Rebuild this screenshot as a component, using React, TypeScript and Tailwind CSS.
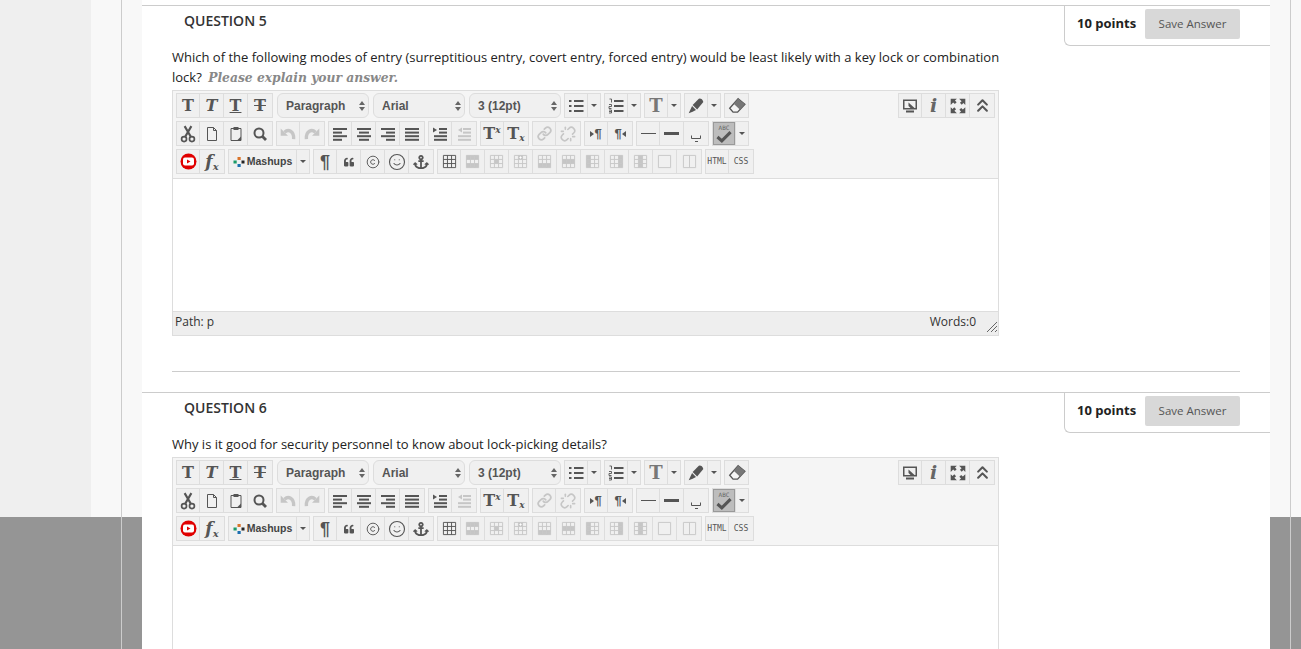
import type { ReactNode } from 'react';
import { Copyright, Link as LinkIcon, Unlink, Smile, ChevronsUp } from 'lucide-react';
import { FaAnchor, FaQuoteLeft } from 'react-icons/fa';

const DARK = '#555555';
const OFF = '#c6c6c6';

function Ico({ children, size = 16 }: { children: ReactNode; size?: number }) {
  return (
    <svg width={size} height={size} viewBox="0 0 16 16" fill="none">
      {children}
    </svg>
  );
}

function Btn({ children }: { children?: ReactNode }) {
  return <div className="flex items-center justify-center w-[24px] h-full">{children}</div>;
}

function Caret() {
  return (
    <div className="flex items-center justify-center w-[12px] h-full">
      <div className="w-0 h-0 border-l-[3px] border-r-[3px] border-t-[3px] border-l-transparent border-r-transparent border-t-[#555]" />
    </div>
  );
}

function Group({ children, className = '' }: { children: ReactNode; className?: string }) {
  return (
    <div className={`flex h-[25px] border border-[#ddd] bg-[#f0f0f0] divide-x divide-[#ddd] [&>*:first-child]:w-[23px] ${className}`}>
      {children}
    </div>
  );
}

function Letter({ children, className = '' }: { children: ReactNode; className?: string }) {
  return (
    <span className={`font-['DejaVu_Serif',serif] font-bold text-[16px] leading-none text-[#555] ${className}`}>
      {children}
    </span>
  );
}

function Select({ label, width }: { label: string; width: string }) {
  return (
    <div className={`flex items-center justify-between h-[25px] pl-[8px] pr-[3px] border border-[#ddd] rounded-md bg-[#f0f0f0] ${width}`}>
      <span className="font-['Liberation_Sans',sans-serif] font-bold text-[12px] text-[#555]">{label}</span>
      <div className="flex flex-col gap-[2px]">
        <div className="w-0 h-0 border-l-[3px] border-r-[3px] border-b-[4px] border-l-transparent border-r-transparent border-b-[#666]" />
        <div className="w-0 h-0 border-l-[3px] border-r-[3px] border-t-[4px] border-l-transparent border-r-transparent border-t-[#666]" />
      </div>
    </div>
  );
}

function Bars({ rows, color = DARK }: { rows: number[][]; color?: string }) {
  return (
    <Ico>
      {rows.map(([x, w], i) => (
        <rect key={i} x={x} y={2 + i * 3.6} width={w} height={2} fill={color} />
      ))}
    </Ico>
  );
}

function Indent({ color, out }: { color: string; out?: boolean }) {
  return (
    <Ico>
      <path d={out ? 'M6 1.5 v5 l-4 -2.5 z' : 'M1 1.5 v5 l4 -2.5 z'} fill={color} />
      <rect x="7" y="2" width="8" height="2" fill={color} />
      <rect x="7" y="5.6" width="8" height="2" fill={color} />
      <rect x="2" y="9.2" width="13" height="2" fill={color} />
      <rect x="2" y="12.8" width="13" height="2" fill={color} />
    </Ico>
  );
}

function Arrow({ flip }: { flip?: boolean }) {
  return (
    <svg width="18" height="18" viewBox="0 0 16 16" fill="none" className={flip ? '-scale-x-100' : ''}>
      <path d="M1.5 3 v6.5 h6.5 z" fill={OFF} />
      <path d="M5 6.5 C8 3.5 13.5 5 13 12.5" stroke={OFF} strokeWidth="3" />
    </svg>
  );
}

// 3x3 table glyph, cells listed in "fill" are shaded
function Grid({ color = OFF, fill = [], plus }: { color?: string; fill?: number[]; plus?: boolean }) {
  const cells = [0, 1, 2, 3, 4, 5, 6, 7, 8];
  return (
    <Ico size={15}>
      {cells
        .filter((c) => fill.includes(c))
        .map((c) => (
          <rect key={c} x={1.5 + (c % 3) * 4.33} y={1.5 + Math.floor(c / 3) * 4.33} width="4.33" height="4.33" fill={color} />
        ))}
      <path d="M1.5 1.5h13v13h-13z M1.5 5.83h13 M1.5 10.17h13 M5.83 1.5v13 M10.17 1.5v13" stroke={color} />
      {plus && <path d="M8 2.5v2.5 M6.8 3.7h2.4" stroke="#fff" />}
    </Ico>
  );
}

function Toolbar() {
  return (
    <div className="flex flex-col gap-[3px] pt-[2px] pb-[4px] px-[3px] bg-[#f5f5f5] border-b border-[#ddd]">
      <div className="flex">
        <Group>
          <Btn><Letter>T</Letter></Btn>
          <Btn><Letter className="italic">T</Letter></Btn>
          <Btn><Letter className="underline">T</Letter></Btn>
          <Btn><Letter className="line-through">T</Letter></Btn>
        </Group>
        <Select label="Paragraph" width="w-[92px] ml-[4px]" />
        <Select label="Arial" width="w-[92px] ml-[4px]" />
        <Select label="3 (12pt)" width="w-[92px] ml-[4px]" />
        <Group className="ml-[3px]">
          <Btn>
            <Ico>
              <rect x="1" y="2" width="2.5" height="2" fill={DARK} />
              <rect x="1" y="7" width="2.5" height="2" fill={DARK} />
              <rect x="1" y="12" width="2.5" height="2" fill={DARK} />
              <rect x="6" y="2" width="9.5" height="2" fill={DARK} />
              <rect x="6" y="7" width="9.5" height="2" fill={DARK} />
              <rect x="6" y="12" width="9.5" height="2" fill={DARK} />
            </Ico>
          </Btn>
          <Caret />
        </Group>
        <Group className="ml-[3px]">
          <Btn>
            <Ico>
              <path d="M1.5 1h2v3.5 M1 6.5h2.5v2h-2.5v2h2.5 M1 12h2.5v3h-2.5 M1 13.5h2.5" stroke={DARK} strokeWidth="0.9" />
              <rect x="6" y="2" width="9.5" height="2" fill={DARK} />
              <rect x="6" y="7" width="9.5" height="2" fill={DARK} />
              <rect x="6" y="12" width="9.5" height="2" fill={DARK} />
            </Ico>
          </Btn>
          <Caret />
        </Group>
        <Group className="ml-[3px]">
          <Btn><Letter className="text-[#777] text-[18px]">T</Letter></Btn>
          <Caret />
        </Group>
        <Group className="ml-[3px]">
          <Btn>
            <svg width="18" height="18" viewBox="0 0 16 16" fill="none">
              <path d="M5 7 L10.5 1.5 Q13.5 1 14.5 4.5 L9 11 Z" fill={DARK} />
              <path d="M4.5 8 L8 11.5 L5 13 L1.5 14.5 Z" fill={DARK} />
            </svg>
          </Btn>
          <Caret />
        </Group>
        <Group className="ml-[3px]">
          <Btn>
            <svg width="18" height="18" viewBox="0 0 16 16" fill="none">
              <path d="M9 1.5 L15 6.5 L8.5 13.5 L4.5 13.5 L1.5 10 Z" stroke={DARK} strokeWidth="1.2" fill="#f5f5f5" />
              <path d="M9 1.5 L15 6.5 L10.5 11 L5 6 Z" fill="#777" />
            </svg>
          </Btn>
        </Group>
        <Group className="ml-auto">
          <Btn>
            <Ico>
              <path d="M1 1.5h14v10H1z" fill={DARK} />
              <path d="M2.5 3h11v7h-11z" fill="#f0f0f0" />
              <path d="M6.5 4.5 L12.5 10 H8.5 L6.5 8 Z" fill={DARK} />
              <rect x="4" y="12.5" width="8" height="2" fill={DARK} />
            </Ico>
          </Btn>
          <Btn><Letter className="italic text-[#666] text-[19px]">i</Letter></Btn>
          <Btn>
            <svg width="18" height="18" viewBox="0 0 16 16">
              <path d="M1.5 1.5h5.5l-1.7 1.7 1.5 1.5-1.6 1.6-1.5-1.5L1.5 7z M14.5 1.5V7l-1.7-1.7-1.5 1.5-1.6-1.6 1.5-1.5L9 1.5z M1.5 14.5V9l1.7 1.7 1.5-1.5 1.6 1.6-1.5 1.5L7 14.5z M14.5 14.5H9l1.7-1.7-1.5-1.5 1.6-1.6 1.5 1.5L14.5 9z" fill={DARK} />
            </svg>
          </Btn>
          <Btn><ChevronsUp size={21} color={DARK} strokeWidth={2.4} /></Btn>
        </Group>
      </div>

      <div className="flex gap-[3px]">
        <Group>
          <Btn>
            <svg width="18" height="18" viewBox="0 0 16 16" fill="none">
              <circle cx="4.5" cy="12.5" r="2.2" stroke={DARK} strokeWidth="1.5" />
              <circle cx="11.5" cy="12.5" r="2.2" stroke={DARK} strokeWidth="1.5" />
              <path d="M5.5 10.5 L11 1 M10.5 10.5 L5 1" stroke={DARK} strokeWidth="1.9" />
            </svg>
          </Btn>
          <Btn>
            <Ico><path d="M3.5 1.5h6l3 3v10h-9z M9.5 1.5v3h3" stroke={DARK} /></Ico>
          </Btn>
          <Btn>
            <Ico>
              <path d="M3 2.5h10v12H3z" stroke={DARK} />
              <path d="M5.5 1h5v3h-5z" fill={DARK} />
              <path d="M9 14.5l4-4v4z" fill={DARK} />
            </Ico>
          </Btn>
          <Btn>
            <Ico>
              <circle cx="7" cy="7" r="4.5" stroke={DARK} strokeWidth="2" />
              <path d="M10 10 L14 14" stroke={DARK} strokeWidth="2.8" />
            </Ico>
          </Btn>
        </Group>
        <Group>
          <Btn><Arrow /></Btn>
          <Btn><Arrow flip /></Btn>
        </Group>
        <Group>
          <Btn><Bars rows={[[1, 14], [1, 9], [1, 14], [1, 9]]} /></Btn>
          <Btn><Bars rows={[[1, 14], [3, 10], [1, 14], [3, 10]]} /></Btn>
          <Btn><Bars rows={[[1, 14], [6, 9], [1, 14], [6, 9]]} /></Btn>
          <Btn><Bars rows={[[1, 14], [1, 14], [1, 14], [1, 14]]} /></Btn>
        </Group>
        <Group>
          <Btn><Indent color={DARK} /></Btn>
          <Btn><Indent color={OFF} out /></Btn>
        </Group>
        <Group>
          <Btn>
            <Letter>T<sup className="text-[9px] italic -top-[6px]">x</sup></Letter>
          </Btn>
          <Btn>
            <Letter>T<sub className="text-[9px] italic -bottom-[2px]">x</sub></Letter>
          </Btn>
        </Group>
        <Group>
          <Btn><LinkIcon size={15} color={OFF} strokeWidth={2.8} /></Btn>
          <Btn><Unlink size={16} color={OFF} strokeWidth={2.4} /></Btn>
        </Group>
        <Group>
          <Btn>
            <span className="flex items-center text-[#555] font-['Liberation_Sans',sans-serif] font-bold text-[13px] leading-none">
              <span className="w-0 h-0 border-t-[3px] border-b-[3px] border-l-[4px] border-t-transparent border-b-transparent border-l-[#555]" />¶
            </span>
          </Btn>
          <Btn>
            <span className="flex items-center text-[#555] font-['Liberation_Sans',sans-serif] font-bold text-[13px] leading-none">
              ¶<span className="w-0 h-0 border-t-[3px] border-b-[3px] border-r-[4px] border-t-transparent border-b-transparent border-r-[#555]" />
            </span>
          </Btn>
        </Group>
        <Group>
          <Btn><div className="w-[15px] h-px bg-[#555]" /></Btn>
          <Btn><div className="w-[15px] h-[3px] bg-[#555]" /></Btn>
          <Btn>
            <Ico>
              <path d="M3.5 9.5v3h9v-3" stroke={DARK} />
              <rect x="7" y="15" width="3" height="1" fill={DARK} />
            </Ico>
          </Btn>
        </Group>
        <Group>
          <Btn>
            <div className="flex flex-col items-center justify-center w-[23px] h-[23px] bg-[#bdbdbd] border border-[#999]">
              <span className="font-['DejaVu_Sans_Mono',monospace] text-[6px] leading-[6px] text-[#666]">ABC</span>
              <svg width="18" height="12" viewBox="0 0 16 11" fill="none">
                <path d="M2 5.5 L6 9 L14 1" stroke={DARK} strokeWidth="2.8" />
              </svg>
            </div>
          </Btn>
          <Caret />
        </Group>
      </div>

      <div className="flex gap-[3px]">
        <Group>
          <Btn>
            <svg width="17" height="17" viewBox="0 0 17 17">
              <circle cx="8.5" cy="8.5" r="8" fill="#e00000" />
              <rect x="3" y="4.5" width="11" height="8" rx="2" fill="#fff" />
              <path d="M7 6.5v4l3.5-2z" fill="#e00000" />
            </svg>
          </Btn>
          <Btn>
            <span className="font-['DejaVu_Serif',serif] font-bold italic text-[17px] leading-none text-[#555]">
              f<sub className="text-[10px] -bottom-[3px]">x</sub>
            </span>
          </Btn>
        </Group>
        <Group className="[&>*:first-child]:w-[68px]">
          <div className="flex items-center justify-center gap-[2px] h-full">
            <svg width="12" height="12" viewBox="0 0 12 12">
              <rect x="4.5" y="1" width="3.2" height="3" fill="#d9742b" />
              <rect x="0.5" y="4.5" width="3.2" height="3" fill="#1a9a68" />
              <rect x="8.5" y="4.5" width="3" height="3" fill="#222" />
              <rect x="4.5" y="8" width="3.2" height="3" fill="#1c6fb0" />
            </svg>
            <span className="font-['Liberation_Sans',sans-serif] font-bold text-[10.5px] text-[#444]">Mashups</span>
          </div>
          <Caret />
        </Group>
        <Group>
          <Btn>
            <span className="font-['Liberation_Sans',sans-serif] font-bold text-[18px] leading-none text-[#555]">¶</span>
          </Btn>
          <Btn><FaQuoteLeft size={10} color={DARK} /></Btn>
          <Btn><Copyright size={14} color={DARK} strokeWidth={1.6} /></Btn>
          <Btn><Smile size={18} color={DARK} strokeWidth={1.5} /></Btn>
          <Btn><FaAnchor size={16} color={DARK} /></Btn>
        </Group>
        <Group>
          <Btn><Grid color={DARK} /></Btn>
          <Btn><Grid fill={[0, 1, 2, 6, 7, 8]} /></Btn>
          <Btn><Grid fill={[4]} /></Btn>
          <Btn><Grid fill={[1]} plus /></Btn>
          <Btn><Grid fill={[6, 7, 8]} /></Btn>
          <Btn><Grid fill={[3, 4, 5]} /></Btn>
          <Btn><Grid fill={[0, 3, 6]} /></Btn>
          <Btn><Grid fill={[2, 5, 8]} /></Btn>
          <Btn><Grid fill={[1, 4, 7]} /></Btn>
          <Btn>
            <Ico size={15}><path d="M1.5 1.5h13v13h-13z" stroke={OFF} /></Ico>
          </Btn>
          <Btn>
            <Ico size={15}><path d="M1.5 1.5h13v13h-13z M8 1.5v13" stroke={OFF} /></Ico>
          </Btn>
        </Group>
        <Group>
          <Btn>
            <span className="font-['DejaVu_Sans_Mono',monospace] text-[8px] text-[#555]">HTML</span>
          </Btn>
          <Btn>
            <span className="font-['DejaVu_Sans_Mono',monospace] text-[8px] text-[#555]">CSS</span>
          </Btn>
        </Group>
      </div>
    </div>
  );
}

function Editor() {
  return (
    <div className="w-[827px] border border-[#ddd]">
      <Toolbar />
      <div className="h-[132px] bg-white" />
      <div className="flex items-center justify-between h-[24px] pl-[2px] pb-[4px] bg-[#eeeeee] border-t border-[#ddd] text-[12px] text-[#333]">
        <span>Path: p</span>
        <div className="flex items-center">
          <span>Words:0</span>
          <svg width="12" height="12" viewBox="0 0 12 12" className="ml-[10px] mt-[10px]">
            <path d="M1 11 L11 1 M5 11 L11 5 M9 11 L11 9" stroke="#666" />
          </svg>
        </div>
      </div>
    </div>
  );
}

function Question({ num, children }: { num: number; children: ReactNode }) {
  return (
    <section className="border-t border-[#ccc]">
      <div className="flex justify-between h-[40px]">
        <h3 className="pl-[42px] pt-[5px] text-[14px] leading-[20px] font-semibold text-[#333]">QUESTION {num}</h3>
        <div className="flex w-[206px] pl-[12px] pt-[3px] border-l border-b border-[#ccc] rounded-bl-md">
          <span className="w-[68px] pt-[4px] text-[13px] leading-[20px] font-bold text-[#222]">10 points</span>
          <button className="w-[95px] h-[30px] bg-[#d8d8d8] rounded-[2px] text-[11.5px] text-[#555]">Save Answer</button>
        </div>
      </div>
      <div className="pl-[30px]">{children}</div>
    </section>
  );
}

function Side({ width }: { width: string }) {
  return (
    <div className={`flex flex-col shrink-0 ${width}`}>
      <div className="flex-1" />
      <div className="h-[132px] bg-[#959595]" />
    </div>
  );
}

export default function App() {
  return (
    <div className="flex h-[649px] overflow-hidden font-['Open_Sans',sans-serif] bg-[#f8f8f8]">
      <div className="flex shrink-0">
        <Side width="w-[91px] bg-[#efefef]" />
        <Side width="w-[30px]" />
        <Side width="w-[21px] border-l border-[#ccc]" />
      </div>
      <main className="w-[1128px] shrink-0 pt-[5px] bg-white">
        <Question num={5}>
          <p className="w-[835px] mt-[1px] mb-[2px] text-[13px] leading-[20px] text-[#222]">
            Which of the following modes of entry (surreptitious entry, covert entry, forced entry) would be least likely with a key lock or combination lock?{' '}
            <em className="ml-[3px] font-['DejaVu_Serif',serif] font-bold text-[12.3px] text-[#888]">Please explain your answer.</em>
          </p>
          <Editor />
        </Question>
        <hr className="mt-[35px] mb-[20px] ml-[30px] w-[1068px] border-[#ccc]" />
        <Question num={6}>
          <p className="mt-[1px] mb-[3px] text-[13px] leading-[20px] text-[#222]">
            Why is it good for security personnel to know about lock-picking details?
          </p>
          <Editor />
        </Question>
      </main>
      <div className="flex shrink-0">
        <Side width="w-[20px]" />
        <Side width="w-[11px] border-l border-[#ccc]" />
      </div>
    </div>
  );
}
